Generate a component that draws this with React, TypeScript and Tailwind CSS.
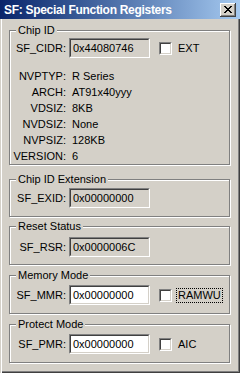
import React from "react";

const font = { fontFamily: '"Liberation Sans", Arial, sans-serif' };

function Group({ label, className, children }: { label: string; className: string; children: React.ReactNode }) {
  return (
    <div className={`relative w-[221px] border border-[#808080] shadow-[1px_1px_0_#ffffff,inset_1px_1px_0_#ffffff] ${className}`}>
      <span className="absolute left-[6px] top-[-8px] bg-[#D4D0C8] px-[2px] text-[11px] leading-[14px] text-black">{label}</span>
      {children}
    </div>
  );
}

function Field({ value, white }: { value: string; white?: boolean }) {
  return (
    <div
      className={`ml-[3px] flex h-[20px] w-[81px] items-center border-t border-l border-t-[#808080] border-l-[#808080] border-b border-r border-b-white border-r-white ${white ? "bg-white" : "bg-[#D4D0C8]"}`}
    >
      <div className="flex h-full w-full items-center border-t border-l border-t-[#404040] border-l-[#404040] border-b border-r border-b-[#D4D0C8] border-r-[#D4D0C8] pl-[2px] text-[11px] leading-none text-black">
        {value}
      </div>
    </div>
  );
}

function Check() {
  return (
    <div className="ml-[9px] h-[13px] w-[13px] border-t border-l border-t-[#808080] border-l-[#808080] border-b border-r border-b-white border-r-white">
      <div className="h-full w-full border-t border-l border-t-[#404040] border-l-[#404040] border-b border-r border-b-[#D4D0C8] border-r-[#D4D0C8] bg-white" />
    </div>
  );
}

function Label({ text }: { text: string }) {
  return <div className="w-[56px] text-right text-[11px] leading-none text-black">{text}</div>;
}

function Info({ k, v }: { k: string; v: string }) {
  return (
    <div className="flex h-[16px] items-center">
      <Label text={k} />
      <div className="ml-[6px] text-[11px] leading-none text-black">{v}</div>
    </div>
  );
}

export default function App() {
  return (
    <div className="flex h-[373px] w-[240px] flex-col bg-[#D4D0C8]" style={font}>
      <div className="flex h-[19px] shrink-0 items-center bg-gradient-to-r from-[#0A246A] to-[#A6CAF0] pl-[4px] pr-[4px]">
        <span className="text-[12px] font-bold leading-none tracking-[-0.3px] text-white">SF: Special Function Registers</span>
        <div className="ml-auto h-[14px] w-[16px] bg-[#D4D0C8] shadow-[inset_-1px_-1px_0_#404040,inset_1px_1px_0_#ffffff,inset_-2px_-2px_0_#808080] flex items-center justify-center">
          <svg width="8" height="7" viewBox="0 0 8 7" className="mt-[-1px] mr-[1px]">
            <path d="M0 0h2v1h-2zM6 0h2v1h-2zM1 1h2v1h-2zM5 1h2v1h-2zM2 2h4v1h-4zM3 3h2v1h-2zM2 4h4v1h-4zM1 5h2v1h-2zM5 5h2v1h-2zM0 6h2v1h-2zM6 6h2v1h-2z" fill="#000" />
          </svg>
        </div>
      </div>
      <div className="flex flex-1 flex-col pl-[9px] shadow-[inset_1px_0_0_#D4D0C8,inset_2px_0_0_#ffffff,inset_-1px_-1px_0_#404040,inset_-2px_-2px_0_#808080]">
        <Group label="Chip ID" className="mt-[11px] h-[135px] pt-[7px]">
          <div className="flex items-center">
            <Label text="SF_CIDR:" />
            <Field value="0x44080746" />
            <Check />
            <span className="ml-[6px] text-[11px] leading-none text-black">EXT</span>
          </div>
          <div className="mt-[10px] flex flex-col">
            <Info k="NVPTYP:" v="R Series" />
            <Info k="ARCH:" v="AT91x40yyy" />
            <Info k="VDSIZ:" v="8KB" />
            <Info k="NVDSIZ:" v="None" />
            <Info k="NVPSIZ:" v="128KB" />
            <Info k="VERSION:" v="6" />
          </div>
        </Group>
        <Group label="Chip ID Extension" className="mt-[14px] h-[38px] pt-[8px]">
          <div className="flex items-center">
            <Label text="SF_EXID:" />
            <Field value="0x00000000" />
          </div>
        </Group>
        <Group label="Reset Status" className="mt-[9px] h-[39px] pt-[10px]">
          <div className="flex items-center">
            <Label text="SF_RSR:" />
            <Field value="0x0000006C" />
          </div>
        </Group>
        <Group label="Memory Mode" className="mt-[10px] h-[39px] pt-[9px]">
          <div className="flex items-center">
            <Label text="SF_MMR:" />
            <Field value="0x00000000" white />
            <Check />
            <span className="ml-[4px] border border-dotted border-black px-[1px] py-[1px] text-[11px] leading-none text-black">RAMWU</span>
          </div>
        </Group>
        <Group label="Protect Mode" className="mt-[10px] h-[39px] pt-[9px]">
          <div className="flex items-center">
            <Label text="SF_PMR:" />
            <Field value="0x00000000" white />
            <Check />
            <span className="ml-[6px] text-[11px] leading-none text-black">AIC</span>
          </div>
        </Group>
      </div>
    </div>
  );
}
